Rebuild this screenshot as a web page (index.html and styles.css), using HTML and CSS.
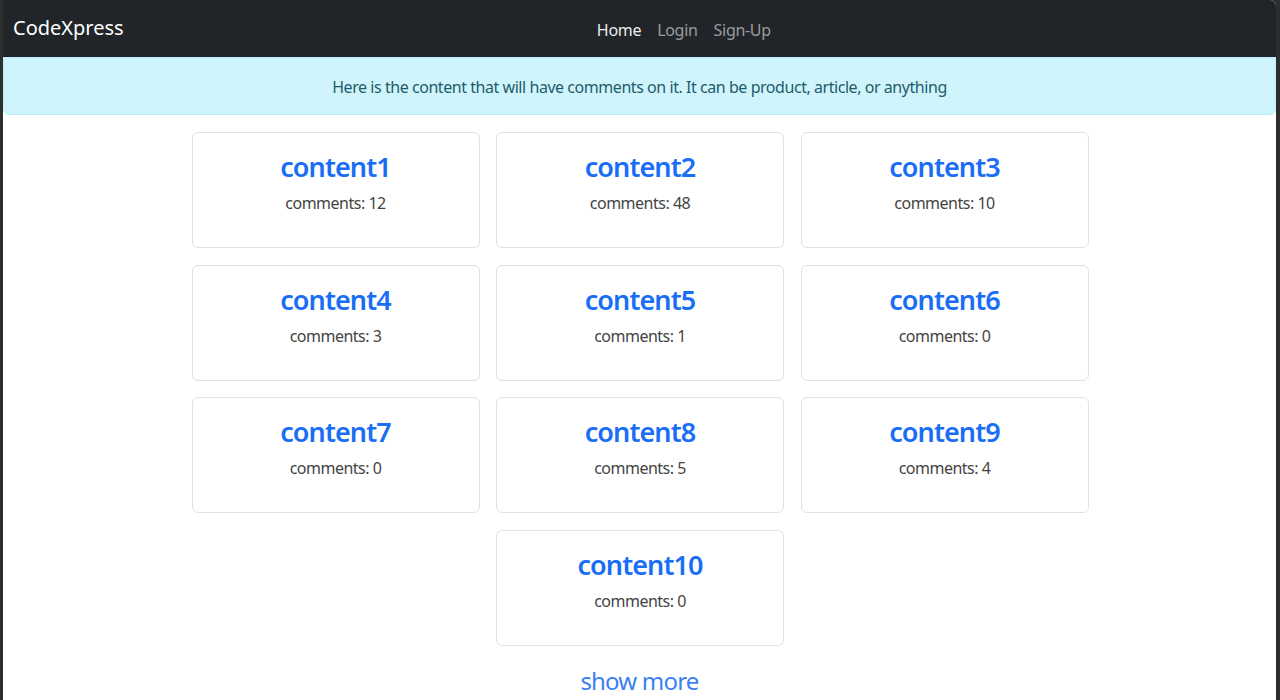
FILE: index.html
```html
<!DOCTYPE html>
<html lang="en">
<head>
<meta charset="utf-8">
<title>CodeXpress</title>
<link rel="stylesheet" href="styles.css">
</head>
<body>
<div class="frame">
  <div class="window">
    <nav class="navbar">
      <a class="brand" href="#">CodeXpress</a>
      <ul class="nav">
        <li><a class="nav-link active" href="#">Home</a></li>
        <li><a class="nav-link" href="#">Login</a></li>
        <li><a class="nav-link" href="#">Sign-Up</a></li>
      </ul>
    </nav>
    <div class="alert">Here is the content that will have comments on it. It can be product, article, or anything</div>
    <main class="cards">
      <div class="card"><h3 class="card-title">content1</h3><p class="card-text">comments: 12</p></div>
      <div class="card"><h3 class="card-title">content2</h3><p class="card-text">comments: 48</p></div>
      <div class="card"><h3 class="card-title">content3</h3><p class="card-text">comments: 10</p></div>
      <div class="card"><h3 class="card-title">content4</h3><p class="card-text">comments: 3</p></div>
      <div class="card"><h3 class="card-title">content5</h3><p class="card-text">comments: 1</p></div>
      <div class="card"><h3 class="card-title">content6</h3><p class="card-text">comments: 0</p></div>
      <div class="card"><h3 class="card-title">content7</h3><p class="card-text">comments: 0</p></div>
      <div class="card"><h3 class="card-title">content8</h3><p class="card-text">comments: 5</p></div>
      <div class="card"><h3 class="card-title">content9</h3><p class="card-text">comments: 4</p></div>
      <div class="card"><h3 class="card-title">content10</h3><p class="card-text">comments: 0</p></div>
    </main>
    <div class="more"><a href="#" class="more-link">show more</a></div>
  </div>
</div>
</body>
</html>
```
FILE: styles.css
```css
* { box-sizing: border-box; }
html, body { margin: 0; padding: 0; height: 100%; }
body {
  background: #2e2e2e;
  font-family: "Noto Sans", "Open Sans", sans-serif;
  font-size: 16px;
  line-height: 1.5;
  color: #212529;
  overflow: hidden;
}
.frame {
  padding: 0 4px 0 3px;
  height: 700px;
}
.window {
  background: #fff;
  height: 100%;
  border-top-right-radius: 6px;
  overflow: hidden;
}
.navbar {
  background: #212529;
  height: 57px;
  display: flex;
  align-items: center;
  padding: 2px 12px 0 10px;
}
.brand {
  color: #fff;
  text-decoration: none;
  font-size: 20px;
  margin-right: 16px;
  margin-top: -3px;
}
.nav {
  flex: 1;
  display: flex;
  justify-content: center;
  list-style: none;
  margin: 0;
  padding: 0 36px 0 0;
}
.nav-link {
  display: block;
  padding: 8px 8px;
  color: rgba(255,255,255,.55);
  text-decoration: none;
  font-size: 16px;
  letter-spacing: -0.3px;
}
.nav-link.active { color: #ececec; }
.alert {
  background: #cff4fc;
  border: 1px solid #b6effb;
  color: #1f5c6b;
  border-radius: 0 0 6px 6px;
  padding: 17px 16px 15px;
  text-align: center;
  letter-spacing: -0.45px;
}
.cards {
  width: 898px;
  margin: 17px auto 0;
  padding-left: 1px;
  display: flex;
  flex-wrap: wrap;
  justify-content: center;
  gap: 16.5px;
}
.card {
  width: 288px;
  height: 116px;
  border: 1px solid #dee2e6;
  border-radius: 6px;
  padding: 18px 16px 16px;
  text-align: center;
}
.card-title {
  margin: 0 0 8px;
  font-size: 27px;
  font-weight: 600;
  line-height: 1.2;
  color: #1a6ef5;
  letter-spacing: -0.9px;
}
.card-text {
  margin: 0;
  color: #444;
  font-size: 16px;
  letter-spacing: -0.5px;
}
.more {
  text-align: center;
  margin-top: 17px;
}
.more-link {
  color: #3b7ff2;
  font-size: 24px;
  text-decoration: none;
  letter-spacing: -0.8px;
}
```
